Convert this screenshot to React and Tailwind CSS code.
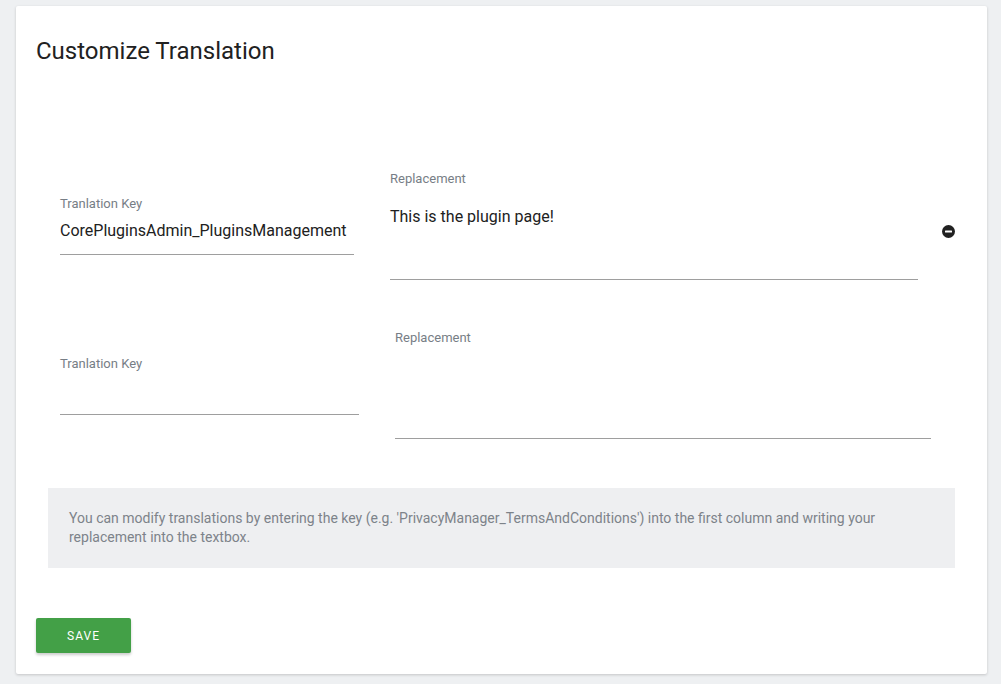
import React from "react";

// Translation customizer card, flat material-ish form
const rows = [
  {
    key: "CorePluginsAdmin_PluginsManagement",
    value: "This is the plugin page!",
    keyW: "w-[294px]",
    valW: "w-[528px]",
    keyTop: "mt-[25px]",
    removable: true,
  },
  {
    key: "",
    value: "",
    keyW: "w-[299px]",
    valW: "w-[536px]",
    keyTop: "mt-[26px]",
    removable: false,
  },
];

function MinusCircle() {
  return (
    <svg width="13" height="13" viewBox="0 0 13 13">
      <circle cx="6.5" cy="6.5" r="6.5" fill="#212121" />
      <rect x="3" y="5.5" width="7" height="2" rx="0.5" fill="#fff" />
    </svg>
  );
}

export default function App() {
  return (
    <div
      className="min-h-screen bg-[#eef0f2] pt-[6px] pl-[16px]"
      style={{ fontFamily: "Roboto, 'Liberation Sans', sans-serif" }}
    >
      <div className="w-[971px] bg-white rounded-[2px] shadow-[0_1px_3px_rgba(0,0,0,0.18)] pt-[29px] pl-[20px] pb-[21px]">
        <h2 className="text-[24px] leading-[32px] text-[#212121]">
          Customize Translation
        </h2>

        <div className="mt-[104px] ml-[24px] flex flex-col gap-[50px]">
          {rows.map((r, i) => (
            <div key={i} className="flex items-start">
              <div className={`${r.keyW} ${r.keyTop}`}>
                <div className="text-[13px] leading-4 text-[#777e86]">
                  Tranlation Key
                </div>
                <div className="h-[43px] pt-[8px] text-[16px] leading-[22px] text-[#212121] border-b border-[#9e9e9e] whitespace-nowrap">
                  {r.key}
                </div>
              </div>
              <div className={`${r.valW} ml-[36px]`}>
                <div className="text-[13px] leading-4 text-[#777e86]">
                  Replacement
                </div>
                <div className="mt-[13px] h-[80px] pt-[6px] text-[16px] leading-[22px] text-[#212121] border-b border-[#9e9e9e]">
                  {r.value}
                </div>
              </div>
              {r.removable && (
                <div className="ml-[24px] mt-[54px] flex">
                  <MinusCircle />
                </div>
              )}
            </div>
          ))}
        </div>

        <div className="mt-[49px] ml-[12px] w-[907px] h-[80px] bg-[#eeeff1] px-[21px] pt-[21px] text-[14px] leading-[19px] text-[#7d838a]">
          You can modify translations by entering the key (e.g.
          'PrivacyManager_TermsAndConditions') into the first column and writing
          your replacement into the textbox.
        </div>

        <button className="mt-[50px] w-[95px] h-[35px] rounded-[2px] bg-[#43a047] text-white text-[12px] tracking-[1px] shadow-[0_2px_3px_rgba(0,0,0,0.2)]">
          SAVE
        </button>
      </div>
    </div>
  );
}
